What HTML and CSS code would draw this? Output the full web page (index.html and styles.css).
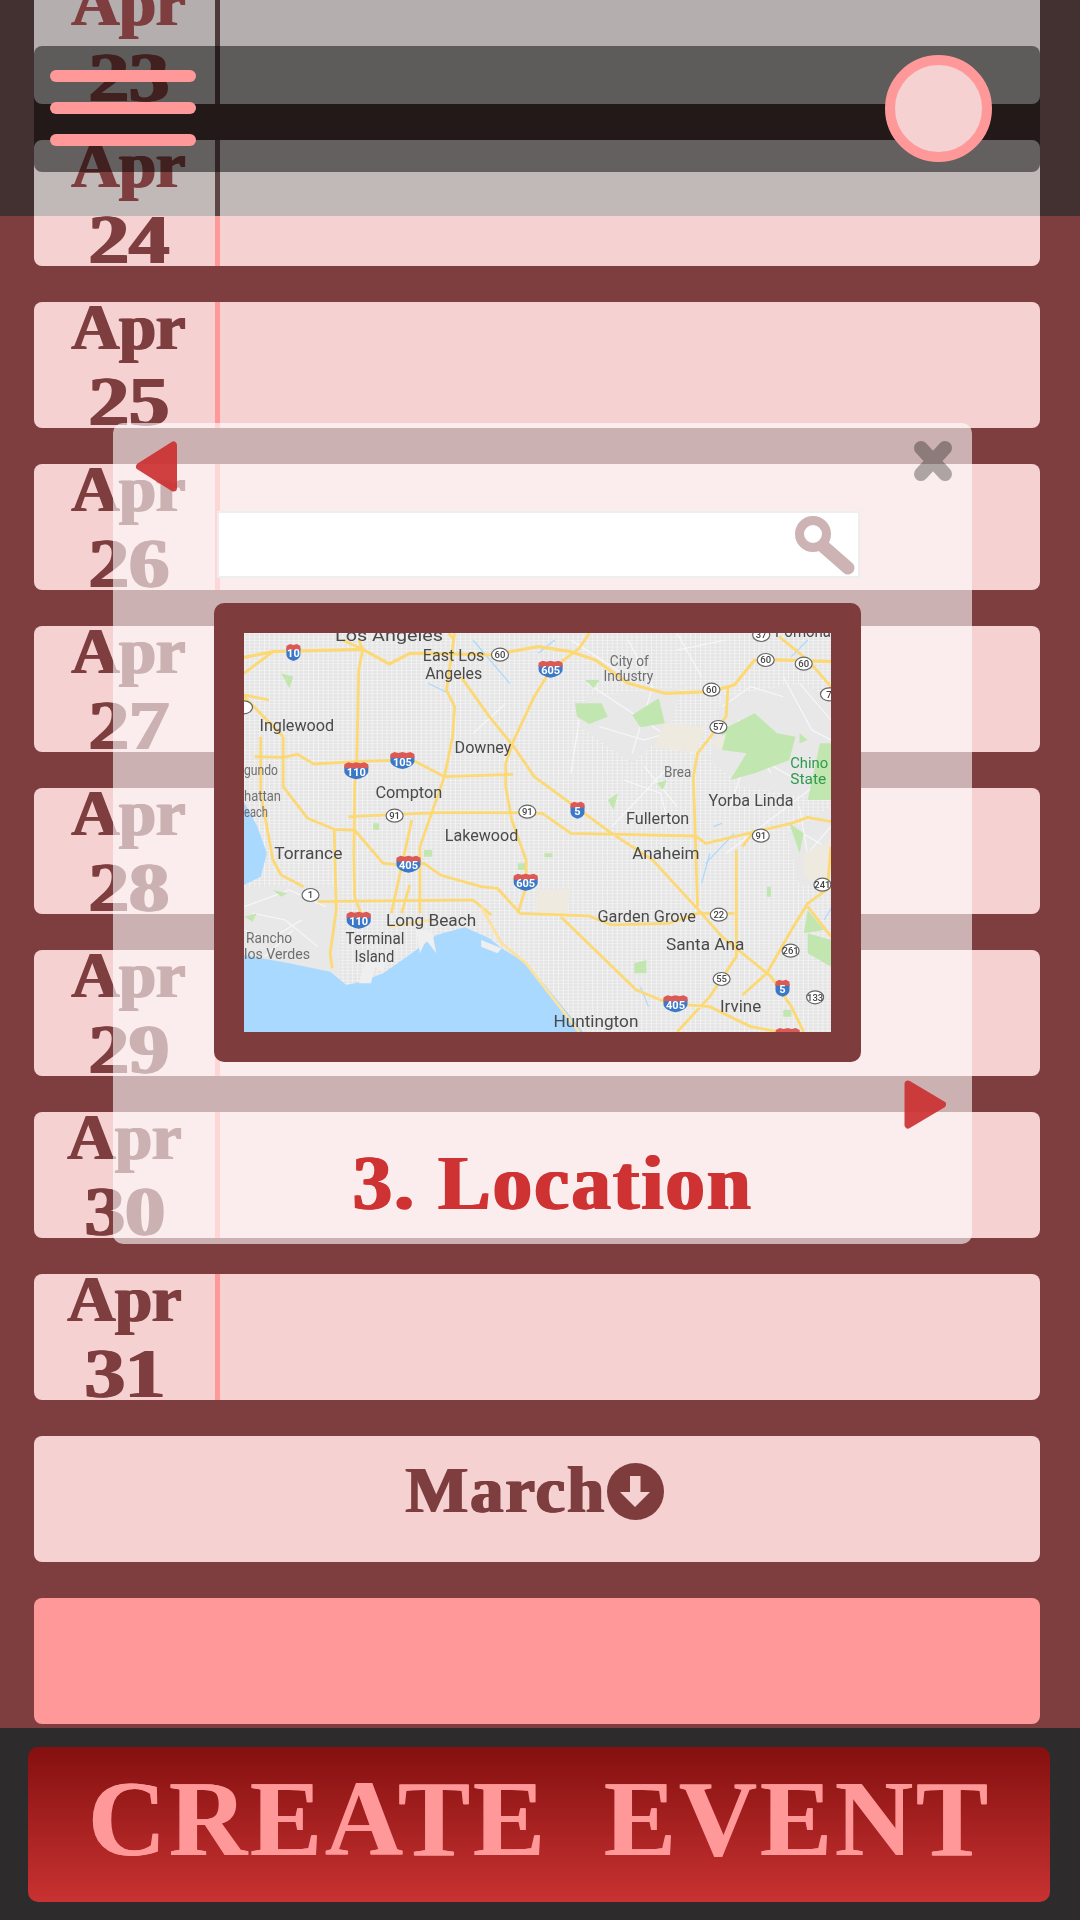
FILE: index.html
```html
<!DOCTYPE html>
<html lang="en">
<head>
<meta charset="utf-8">
<title>Create Event</title>
<link rel="stylesheet" href="styles.css">
</head>
<body>
<div class="page">
  <div class="shade"></div>
  <main class="list">
    <div class="row row-top"><div class="date date-top"><span>Apr</span><span class="num">23</span></div></div>
    <div class="row row-second"><div class="date date-second"><span>Apr</span><span class="num">24</span></div></div>
    <div class="row"><div class="date"><span>Apr</span><span class="num">25</span></div></div>
    <div class="row"><div class="date"><span>Apr</span><span class="num">26</span></div></div>
    <div class="row"><div class="date"><span>Apr</span><span class="num">27</span></div></div>
    <div class="row"><div class="date"><span>Apr</span><span class="num">28</span></div></div>
    <div class="row"><div class="date"><span>Apr</span><span class="num">29</span></div></div>
    <div class="row"><div class="date date-end"><span>Apr</span><span class="num">30</span></div></div>
    <div class="row"><div class="date date-end"><span>Apr</span><span class="num">31</span></div></div>
    <div class="row row-month">
      <span>March</span>
      <svg class="month-icon" viewBox="0 0 57 57"><circle cx="28.5" cy="28.5" r="28.5" class="mi-disc"/><path class="mi-arrow" d="M23 13h10.500v16h9.500L28 44 13 29h10z"/></svg>
    </div>
    <div class="row row-accent"></div>
  </main>
  <footer class="footer"><button class="create">CREATE EVENT</button></footer>

  <header class="topbar">
    <div class="burger"><i></i><i></i><i></i></div>
    <div class="avatar"></div>
  </header>

  <section class="modal">
    <svg class="nav nav-prev" viewBox="0 0 43 51"><path d="M4.500 25.500 38.500 4V47Z"/></svg>
    <svg class="close" viewBox="0 0 40 42"><path d="M8 8 32 34M32 8 8 34"/></svg>
    <div class="search">
      <svg class="lens" viewBox="0 0 60 59"><circle cx="18" cy="18" r="13.500"/><path d="M29 31 53 52"/></svg>
    </div>
    <div class="map-frame">
      <svg class="map" viewBox="0 0 587 399">
        <defs>
          <pattern id="streets" width="12" height="10" patternUnits="userSpaceOnUse">
            <rect width="12" height="10" class="st-bg"/>
            <path d="M0 .7H12M.7 0V10" class="st-line"/>
          </pattern>
          <path id="shield-path" d="M1 4 5 2.500 13 3.500 21 2.500 25 4V9C25 13 19 16 13 17 7 16 1 13 1 9Z"/>
          <g id="shield"><use href="#shield-path" class="sh-blue"/><path d="M1 2 5 0 9 1 13 0 17 1 21 0 25 2V6H1Z" class="sh-red"/></g>
          <g id="shield-s"><path d="M.5 4 7.500 3 14.500 4V10C14.500 14 11 16 7.500 17 4 16 .5 14 .5 10Z" class="sh-blue"/><path d="M.5 2 4 0 7.500 1 11 0 14.500 2V6H.5Z" class="sh-red"/></g>
        </defs>
        <rect width="587" height="399" class="land"/>
        <g transform="translate(-24.08 -13) scale(.4082 .3333)">
          <path class="streets" d="M59 39H1497V1236H59Z"/>
          <path class="soft" d="M900 230 1130 200 1100 330 1010 430 880 320ZM1230 230 1420 190 1497 230V540L1280 500 1200 420ZM59 800H290V1090H59ZM1390 640 1497 560V780L1420 800Z"/>
          <path class="thin" d="M1000 60 1060 200 1010 400M900 190 1160 400M1120 40 1180 170M1380 170 1450 330 1497 360M1100 440 960 620M1270 300 1350 460M1240 700 1497 460M60 860 170 810 260 860M200 900 120 960 60 930M880 300 860 460M860 60 1010 180M1420 560 1450 780M930 320 1040 360 1120 330M1230 260 1300 200 1380 230M1300 400 1400 470M1420 190 1497 300M1400 620 1497 690M1440 700 1497 620M80 880 160 900 240 980M110 1010 180 930M990 480 1080 520 1100 620M1040 440 1120 560M1280 450 1250 560M620 340 700 250M1120 90 1240 60"/>
          <path class="green" d="M870 250 935 250 950 290 905 312 875 290ZM1010 285 1075 235 1090 310 1030 322ZM1230 330 1310 280 1365 340 1410 350 1395 420 1310 460 1250 480 1290 400 1230 390ZM1470 370H1497V540L1440 540ZM895 180H930L915 205ZM150 160 180 170 170 205ZM1440 940 1497 960V1040L1440 1000ZM1015 1030 1045 1020 1045 1060 1015 1060ZM795 700H815V712H795ZM500 690H520V710H500ZM1395 610 1430 640 1420 700ZM1440 870 1480 930 1430 940ZM950 540 975 520 965 570ZM1420 340 1440 360 1420 370ZM130 810 165 820 150 830ZM60 890 90 880 80 905ZM1070 490 1095 480 1085 510ZM375 610H390V630H375ZM730 730H750V750H730ZM1340 800H1350V830H1340ZM1380 1170H1400V1190H1380Z"/>
          <path class="sand" d="M1090 310 1190 320 1165 400 1060 380ZM1200 370 1240 340 1230 390ZM1430 700 1497 660V760L1460 800 1430 760ZM780 810 860 805 850 880 770 880Z"/>
          <path class="water" d="M59 545 92 620 115 700 100 770 59 795ZM59 1005 170 1030 270 1055 310 1095 345 1085 400 1060 470 1000 530 945 600 922 660 955 690 985 745 1025 800 1100 890 1236H59Z"/>
          <path class="harbor" d="M340 1090 360 1010 410 1000 400 1060 380 1040 370 1090ZM480 930 520 935 530 1000 505 960 490 1000ZM640 960 690 985 680 1000 640 980Z"/>
          <path class="water-thin" d="M1190 730 1260 640M1180 790 1200 700M510 190 560 220M620 60 710 190M780 100 820 60M1210 620 1230 610M1500 860 1480 900M1400 110 1440 60M1030 1100 1050 1160"/>
          <path class="road-wide" d="M59 112 130 95 350 88 415 132 465 100 520 100 665 105 780 80 860 95 920 120 1000 190 1090 220 1200 215 1260 195 1310 120 1340 118 1497 125"/>
          <path class="road" d="M340 60 350 88 340 150 335 430 330 500 328 700 330 830 345 880M85 410 155 412 190 403 230 432 330 425 450 420 480 425 550 470 718 463M905 40 880 85 810 150 770 230 720 360 700 430 700 500 715 600 750 720 750 800 730 880M590 170 660 290 720 380 770 470 870 560 960 640 1060 720 1165 860 1230 950 1350 1070 1400 1160 1430 1236M575 40 555 210 575 260 570 350 550 470 490 680 490 880M315 590 530 578 730 578 790 580 860 640 1165 648 1190 670 1260 650 1400 610 1440 592 1497 605M155 350 155 500 215 595 280 628 330 630 400 730 440 735 500 730 540 765 640 800 680 805 735 880 905 888 960 915 1100 910 1170 880 1260 880M835 890 1020 1110 1100 1150 1200 1160 1300 1220 1370 1236M1245 200 1240 290 1170 400 1160 470 1170 860M1265 690 1265 1010 1200 1130 1120 1236M100 350 100 520 130 720 150 765 205 800M280 630 285 870 270 1000 275 1045M470 600 420 880M465 795 445 880M1497 800 1440 850 1400 930 1340 1060 1280 1125M1440 860 1497 950M240 845 620 840 665 885M1280 680 1310 630M59 160 130 95M59 225 120 240M59 230 155 350M1370 50 1440 120 1497 200M1497 680 1490 780M560 40 575 60M350 88 300 60"/>
          <path class="road-pale" d="M640 860 690 970 750 1030 880 1236M415 920 520 900"/>
        </g>

        <use href="#shield-s" x="41.900" y="11"/><text x="49.400" y="24" class="sh-t">10</text>
        <use href="#shield" x="293.600" y="27.700"/><text x="306.600" y="41" class="sh-t">605</text>
        <use href="#shield" x="145.400" y="119"/><text x="158.400" y="132.500" class="sh-t">105</text>
        <use href="#shield" x="99.300" y="129.300"/><text x="112.300" y="143" class="sh-t">110</text>
        <use href="#shield" x="151.500" y="222.700"/><text x="164.500" y="236" class="sh-t">405</text>
        <use href="#shield" x="268.700" y="240.700"/><text x="281.700" y="254" class="sh-t">605</text>
        <use href="#shield" x="101.700" y="278.700"/><text x="114.700" y="292" class="sh-t">110</text>
        <use href="#shield-s" x="326" y="168.700"/><text x="333.500" y="182" class="sh-t">5</text>
        <use href="#shield-s" x="531" y="346.700"/><text x="538.400" y="360" class="sh-t">5</text>
        <use href="#shield" x="418.500" y="362.300"/><text x="431.500" y="376" class="sh-t">405</text>
        <use href="#shield" x="530.700" y="395"/>

        <g class="oval">
          <ellipse cx="256" cy="21.700" rx="8.500" ry="6.500"/><ellipse cx="521.700" cy="27" rx="8.500" ry="6.500"/><ellipse cx="559.700" cy="30.700" rx="8.500" ry="6.500"/><ellipse cx="467.400" cy="56.700" rx="8.500" ry="6.500"/><ellipse cx="585" cy="61.300" rx="8.500" ry="6.500"/><ellipse cx="474.400" cy="94" rx="8.500" ry="6.500"/><ellipse cx="150.600" cy="182.700" rx="8.500" ry="6.500"/><ellipse cx="283.300" cy="178.700" rx="8.500" ry="6.500"/><ellipse cx="516.800" cy="202.700" rx="8.500" ry="6.500"/><ellipse cx="66.500" cy="262" rx="8.500" ry="6.500"/><ellipse cx="474.800" cy="281.700" rx="8.500" ry="6.500"/><ellipse cx="578.400" cy="251.700" rx="8.500" ry="6.500"/><ellipse cx="546.600" cy="317.700" rx="8.500" ry="6.500"/><ellipse cx="477.600" cy="346" rx="8.500" ry="6.500"/><ellipse cx="571.100" cy="364.300" rx="8.500" ry="6.500"/><ellipse cx="517.200" cy="2" rx="8.500" ry="6.500"/><ellipse cx="0" cy="74.300" rx="8.500" ry="6.500"/>
        </g>
        <g class="ov-t">
          <text x="256" y="25">60</text><text x="521.700" y="30.300">60</text><text x="559.700" y="34">60</text><text x="467.400" y="60">60</text><text x="585" y="64.600">7</text><text x="474.400" y="97.300">57</text><text x="150.600" y="186">91</text><text x="283.300" y="182">91</text><text x="516.800" y="206">91</text><text x="66.500" y="265.300">1</text><text x="474.800" y="285">22</text><text x="578.400" y="255">241</text><text x="546.600" y="321">261</text><text x="477.600" y="349.300">55</text><text x="571.100" y="367.600">133</text><text x="517.200" y="5.300">37</text>
        </g>

        <g class="lbl">
          <text x="91" y="8" textLength="108" lengthAdjust="spacingAndGlyphs">Los Angeles</text>
          <text x="178.800" y="28" textLength="61.600" lengthAdjust="spacingAndGlyphs">East Los</text>
          <text x="181.200" y="46.300" textLength="57" lengthAdjust="spacingAndGlyphs">Angeles</text>
          <text x="531" y="3.700" textLength="56" lengthAdjust="spacingAndGlyphs">Pomona</text>
          <text x="15.500" y="98" textLength="74.700" lengthAdjust="spacingAndGlyphs">Inglewood</text>
          <text x="210.600" y="120.300" textLength="56.700" lengthAdjust="spacingAndGlyphs">Downey</text>
          <text x="131.400" y="165.300" textLength="67" lengthAdjust="spacingAndGlyphs">Compton</text>
          <text x="464.500" y="173" textLength="85" lengthAdjust="spacingAndGlyphs">Yorba Linda</text>
          <text x="382" y="190.700" textLength="63.300" lengthAdjust="spacingAndGlyphs">Fullerton</text>
          <text x="200.800" y="207.700" textLength="73.500" lengthAdjust="spacingAndGlyphs">Lakewood</text>
          <text x="388.200" y="225.700" textLength="67.400" lengthAdjust="spacingAndGlyphs">Anaheim</text>
          <text x="30.200" y="226" textLength="68.200" lengthAdjust="spacingAndGlyphs">Torrance</text>
          <text x="353.500" y="288.700" textLength="98.400" lengthAdjust="spacingAndGlyphs">Garden Grove</text>
          <text x="142" y="293" textLength="90.200" lengthAdjust="spacingAndGlyphs">Long Beach</text>
          <text x="422" y="317" textLength="78.400" lengthAdjust="spacingAndGlyphs">Santa Ana</text>
          <text x="101.600" y="311.300" textLength="58.800" lengthAdjust="spacingAndGlyphs">Terminal</text>
          <text x="110.600" y="329" textLength="39.600" lengthAdjust="spacingAndGlyphs">Island</text>
          <text x="476" y="379" textLength="41.200" lengthAdjust="spacingAndGlyphs">Irvine</text>
          <text x="309.400" y="394.300" textLength="85" lengthAdjust="spacingAndGlyphs">Huntington</text>
        </g>
        <g class="lbl lbl-small">
          <text x="365.800" y="32.700" textLength="38.800" lengthAdjust="spacingAndGlyphs">City of</text>
          <text x="359.600" y="47.700" textLength="49.800" lengthAdjust="spacingAndGlyphs">Industry</text>
          <text x="420" y="143.700" textLength="27.400" lengthAdjust="spacingAndGlyphs">Brea</text>
          <text x="0" y="141.700" textLength="34" lengthAdjust="spacingAndGlyphs">gundo</text>
          <text x="0" y="168" textLength="37" lengthAdjust="spacingAndGlyphs">hattan</text>
          <text x="0" y="184.300" textLength="24" lengthAdjust="spacingAndGlyphs">each</text>
          <text x="2" y="310.300" textLength="46" lengthAdjust="spacingAndGlyphs">Rancho</text>
          <text x="0" y="326.300" textLength="66" lengthAdjust="spacingAndGlyphs">los Verdes</text>
        </g>
        <g class="lbl lbl-park">
          <text x="546.200" y="134.700" textLength="38" lengthAdjust="spacingAndGlyphs">Chino</text>
          <text x="546.200" y="150.700" textLength="36" lengthAdjust="spacingAndGlyphs">State</text>
        </g>
      </svg>
    </div>
    <svg class="nav nav-next" viewBox="0 0 44 49"><path d="M5 4 39.500 24.500 5 45Z"/></svg>
    <h2 class="step">3. Location</h2>
  </section>
</div>
</body>
</html>
```
FILE: styles.css
```css
* { box-sizing: border-box; }
html, body { margin: 0; padding: 0; }
body { width: 1080px; height: 1920px; overflow: hidden; }

.page {
  position: relative;
  width: 1080px;
  height: 1920px;
  overflow: hidden;
  display: flex;
  flex-direction: column;
  background: #7e3e3f;
  color: #7e3e3f;
  font-family: "Liberation Serif", "Times New Roman", serif;
  font-weight: 700;
}

.shade {
  position: absolute;
  top: 0; left: 0; right: 0;
  height: 216px;
  background: rgba(45, 43, 44, .72);
  z-index: 1;
}

.list {
  height: 1728px;
  overflow: hidden;
  display: flex;
  flex-direction: column;
  gap: 36px;
  padding: 0 40px 0 34px;
}

.row {
  position: relative;
  z-index: 2;
  flex: none;
  height: 126px;
  margin: 0;
  display: flex;
  align-items: center;
  background: #f5d1d1;
  border-radius: 8px;
  font-size: 66px;
}
.row:first-child { margin-top: -22px; }
.row-top { background: #b4aeae; border-radius: 0 0 8px 8px; }
.row-second { background: linear-gradient(#c1b9b8 76px, #f5d1d1 76px); }

.date {
  flex: none;
  width: 186px;
  height: 126px;
  padding-left: 8px;
  display: flex;
  flex-direction: column;
  align-items: center;
  justify-content: center;
  border-right: 5px solid #ff9999;
  text-shadow: 1.2px 0 0 #7e3e3f, -1.2px 0 0 #7e3e3f;
}
.date-end { padding-left: 0; }
.date-top { border-right-color: #4d3b3c; }
.date-second { border-image: linear-gradient(#5e4545 76px, #ff9999 76px) 1; }
.date span { flex: none; }
.num { display: block; transform: scale(1.22, 1.06); transform-origin: 50% 80%; }

.row-month { justify-content: center; gap: 1px; padding-right: 4px; }
.row-month > span {
  letter-spacing: 2.2px;
  text-shadow: 1.2px 0 0 #7e3e3f, -1.2px 0 0 #7e3e3f;
  margin-top: -18px;
}
.month-icon { width: 57px; height: 57px; flex: none; margin-top: -15px; }
.mi-disc { fill: #7e3c3d; }
.mi-arrow { fill: #f5d1d1; }
.row-accent { background: #ff9999; }

.footer {
  flex: none;
  height: 192px;
  background: #2d2b2c;
  padding: 19px 30px 18px 28px;
}
.create {
  display: block;
  width: 100%;
  height: 155px;
  margin: 0;
  padding: 0 0 12px;
  border: 0;
  border-radius: 10px;
  background: linear-gradient(#84100f, #c83232);
  color: #ff9999;
  font-family: "Liberation Serif", "Times New Roman", serif;
  font-weight: 700;
  font-size: 108px;
  letter-spacing: 3px;
  word-spacing: 26px;
  white-space: nowrap;
  text-shadow: 1px 0 0 #ff9999;
}

.topbar {
  position: absolute;
  top: 46px;
  left: 34px;
  width: 1006px;
  height: 126px;
  background: rgba(0, 0, 0, .48);
  border-radius: 8px;
  z-index: 3;
}
.burger {
  position: absolute;
  top: 24px;
  left: 16px;
  width: 146px;
  display: flex;
  flex-direction: column;
  gap: 20px;
}
.burger i {
  display: block;
  height: 12px;
  background: #ff9999;
  border-radius: 6px;
}
.avatar {
  position: absolute;
  top: 9px;
  left: 851px;
  width: 107px;
  height: 107px;
  border-radius: 50%;
  border: 10px solid #ff9999;
  background: #f5d1d1;
}

.modal {
  position: absolute;
  top: 423px;
  left: 113px;
  width: 859px;
  height: 821px;
  padding: 88px 0 0 104px;
  display: flex;
  flex-direction: column;
  background: rgba(255, 255, 255, .6);
  border-radius: 10px;
  z-index: 4;
}
.nav { position: absolute; opacity: .92; }
.nav path {
  fill: #cd3232;
  stroke: #cd3232;
  stroke-width: 7;
  stroke-linejoin: round;
}
.nav-prev { top: 18px; left: 22px; width: 43px; height: 51px; }
.nav-next { top: 657px; left: 790px; width: 44px; height: 49px; }
.close {
  position: absolute;
  top: 17px;
  left: 800px;
  width: 40px;
  height: 42px;
  opacity: .3;
}
.close path {
  fill: none;
  stroke: #000;
  stroke-width: 14;
  stroke-linecap: round;
}

.search {
  position: relative;
  width: 643px;
  height: 67px;
  background: #fff;
  border: 2px solid #eeeeee;
}
.lens {
  position: absolute;
  top: 3px;
  right: 3px;
  width: 60px;
  height: 59px;
  fill: none;
  stroke: #cdb3b3;
}
.lens circle { stroke-width: 9; }
.lens path { stroke-width: 13; stroke-linecap: round; }

.map-frame {
  margin: 25px 0 0 -3px;
  width: 647px;
  height: 459px;
  padding: 30px;
  background: #7e3c3d;
  border-radius: 10px;
}
.map { display: block; width: 587px; height: 399px; filter: blur(.35px); }
.land { fill: #e6e6e6; }
.streets { fill: url(#streets); }
.st-bg { fill: #e5e5e5; }
.st-line { stroke: #ffffff; stroke-width: 1.4; fill: none; }
.soft { fill: #e8e8e8; }
.green { fill: #c2e6b0; }
.sand { fill: #eeeadf; }
.water { fill: #a9d9ff; }
.harbor { fill: #efefef; }
.water-thin { fill: none; stroke: #a9d9ff; stroke-width: 1.2; vector-effect: non-scaling-stroke; }
.thin { fill: none; stroke: #f8f8f8; stroke-width: 1.1; vector-effect: non-scaling-stroke; }
.road, .road-wide, .road-pale {
  fill: none;
  stroke: #fcd975;
  stroke-width: 2.8;
  stroke-linejoin: round;
  vector-effect: non-scaling-stroke;
}
.road-wide { stroke-width: 3.2; }
.road-pale { stroke: #fce2a0; }
.sh-blue { fill: #3c78c8; }
.sh-red { fill: #dc5a55; }
.sh-t {
  fill: #fff;
  font: 700 11px Roboto, sans-serif;
  text-anchor: middle;
}
.oval ellipse { fill: #fff; stroke: #666; stroke-width: 1.2; }
.ov-t text {
  fill: #444;
  font: 500 9.500px Roboto, sans-serif;
  text-anchor: middle;
}
.lbl text {
  fill: #4a4a4a;
  font: 400 16px Roboto, sans-serif;
}
.lbl-small text { fill: #6f6f6f; font-size: 14px; }
.lbl-park text { fill: #2f9a4e; font-size: 15px; }

.step {
  margin: 0;
  padding: 82px 0 0 25px;
  width: 647px;
  text-align: center;
  color: #cf3232;
  font-size: 78px;
  line-height: 1;
  letter-spacing: 2.5px;
  text-shadow: 1.4px 0 0 #cf3232, -1.4px 0 0 #cf3232;
  white-space: nowrap;
}
```
